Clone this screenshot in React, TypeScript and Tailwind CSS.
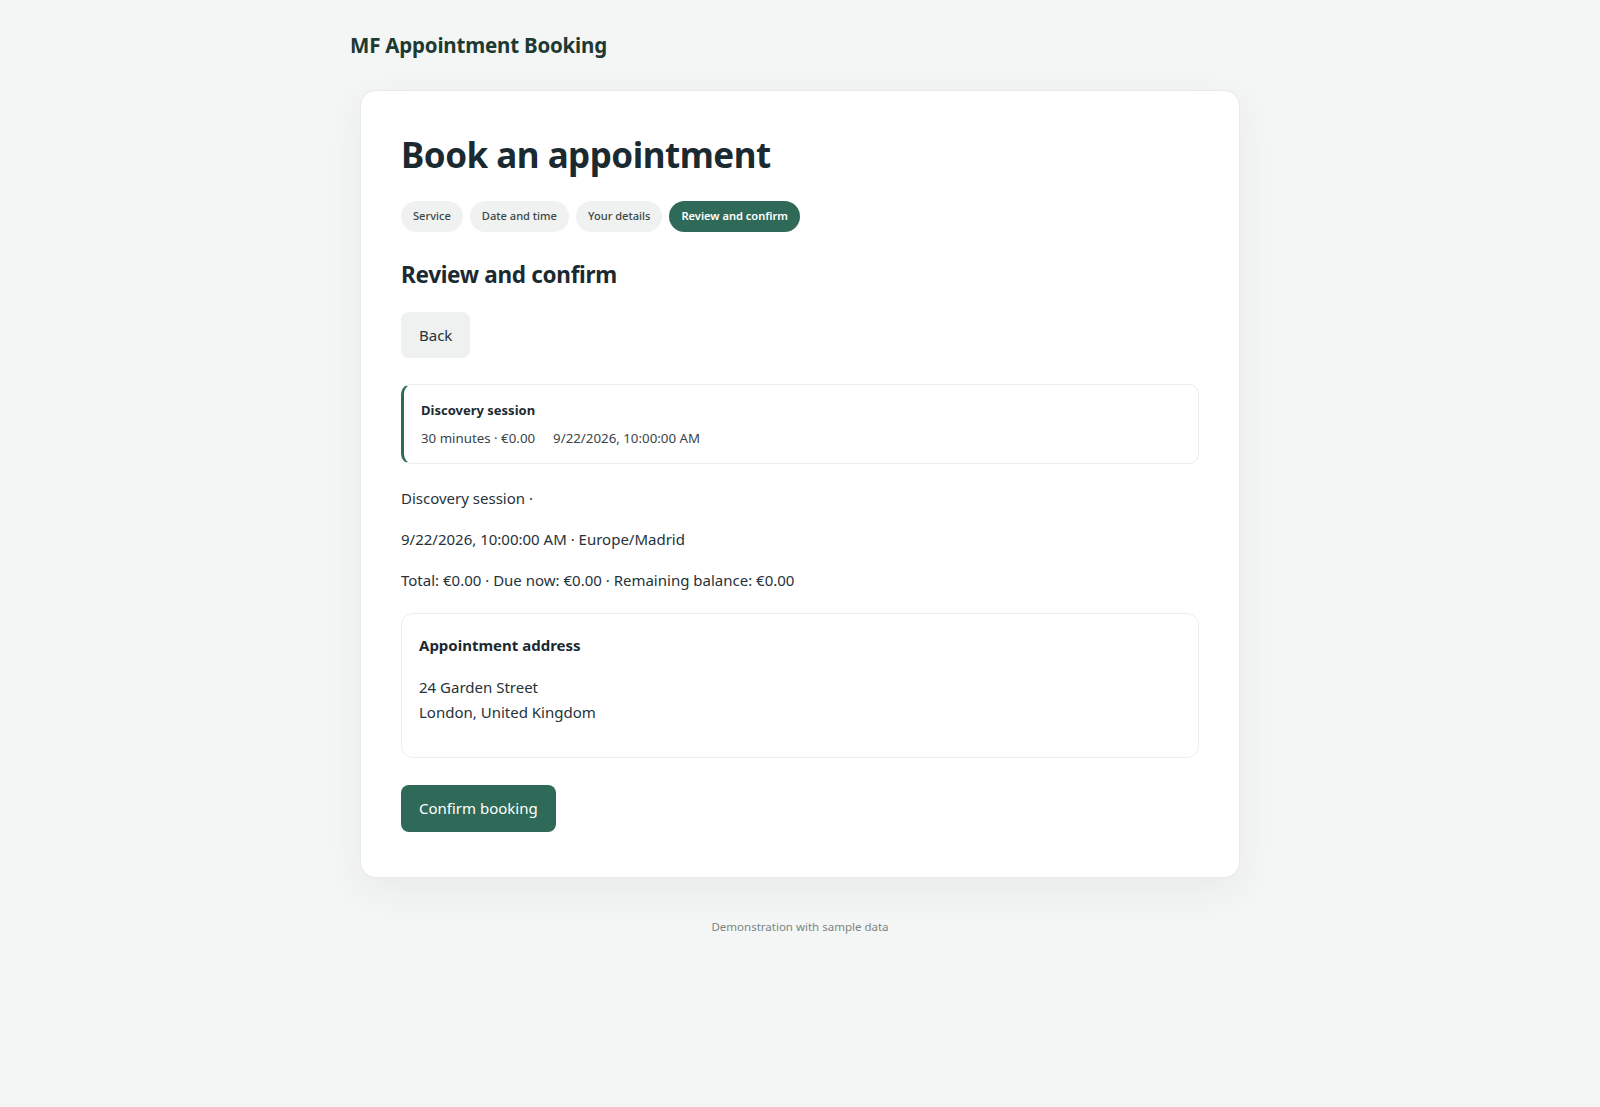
const steps = ['Service', 'Date and time', 'Your details', 'Review and confirm'];

export default function App() {
  const active = 3;

  return (
    <div
      className="min-h-screen bg-[#f4f6f5] text-[#1f2b30]"
      style={{ fontFamily: '"Noto Sans", "Open Sans", sans-serif' }}
    >
      <div className="w-[900px] mx-auto pt-[29px]">
        <header>
          <h1 className="text-[20.5px] leading-[32px] font-bold text-[#1d3a32] tracking-[-0.2px]">
            MF Appointment Booking
          </h1>
        </header>

        <main className="mx-[10px] mt-[29px] bg-white rounded-2xl border border-[#e7ebe9] shadow-[0_12px_40px_rgba(30,50,45,0.06)] px-10 pt-10 pb-[45px]">
          <h2 className="text-[35px] leading-[48px] font-bold text-[#1b2a31] tracking-[-0.5px]">
            Book an appointment
          </h2>

          {/* Steps */}
          <div className="flex gap-[7px] mt-[22px]">
            {steps.map((s, i) => (
              <span
                key={s}
                className={
                  i === active
                    ? 'h-[31px] px-3 rounded-full bg-[#2f6a58] text-white text-[11.1px] font-semibold flex items-center'
                    : 'h-[31px] px-3 rounded-full bg-[#f0f2f1] text-[#3b4744] text-[11.1px] font-medium flex items-center'
                }
              >
                {s}
              </span>
            ))}
          </div>

          <h3 className="mt-[27px] text-[22.5px] leading-[32px] font-bold text-[#1b2a31] tracking-[-0.3px]">
            Review and confirm
          </h3>

          <button className="mt-[21px] h-[46px] px-[18px] rounded-lg bg-[#eef1f0] text-[15px] text-[#24323a]">
            Back
          </button>

          {/* Summary */}
          <div className="mt-[26px] border border-[#eceeed] border-l-[3px] border-l-[#2f6a58] rounded-[10px] pl-[17px] pr-5 pt-[14px] pb-[15px]">
            <div className="text-[13px] leading-[22px] font-bold text-[#1b2a31]">Discovery session</div>
            <div className="mt-[7px] flex gap-[18px] text-[13.3px] leading-[20px] text-[#39454a]">
              <span>30 minutes · €0.00</span>
              <span>9/22/2026, 10:00:00 AM</span>
            </div>
          </div>

          <div className="mt-[21px] flex flex-col gap-[15px] text-[15px] leading-[26px] text-[#26323a]">
            <p>Discovery session ·</p>
            <p>9/22/2026, 10:00:00 AM · Europe/Madrid</p>
            <p>Total: €0.00 · Due now: €0.00 · Remaining balance: €0.00</p>
          </div>

          {/* Address */}
          <div className="mt-[20px] border border-[#eceeed] rounded-xl px-[17px] pt-[18px] pb-[32px]">
            <div className="text-[15px] leading-[26px] font-bold text-[#1b2a31]">Appointment address</div>
            <div className="mt-[17px] text-[15px] leading-[25px] text-[#26323a]">
              <p>24 Garden Street</p>
              <p>London, United Kingdom</p>
            </div>
          </div>

          <button className="mt-[27px] h-[47px] px-[18px] rounded-lg bg-[#2f6a58] text-white text-[15px]">
            Confirm booking
          </button>
        </main>

        <footer className="mt-[40px] text-center text-[11.5px] leading-[18px] text-[#7b8582]">
          Demonstration with sample data
        </footer>
      </div>
    </div>
  );
}
